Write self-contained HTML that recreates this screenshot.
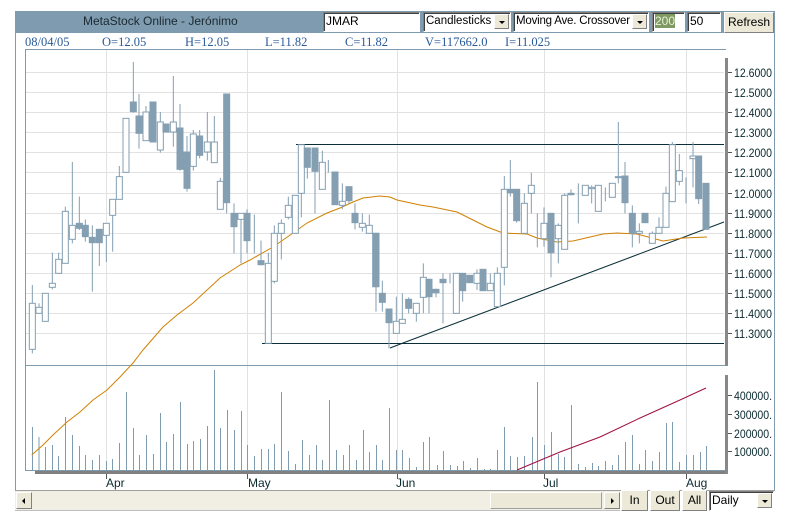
<!DOCTYPE html>
<html><head><meta charset="utf-8"><style>
body{margin:0;width:790px;height:522px;background:#fff;position:relative;overflow:hidden;font-family:"Liberation Sans",sans-serif}
.a{position:absolute}
.ser{font-family:"Liberation Serif",serif;font-size:12.5px;color:#2a5a98;top:35px}
.btn{position:absolute;background:#ece9d8;border:1px solid;border-color:#fff #808080 #808080 #fff;box-sizing:border-box;font-size:12px;text-align:center;line-height:19px;color:#000}
.inp{position:absolute;background:#fff;border:1px solid;border-color:#808080 #fff #fff #808080;box-shadow:inset 1px 1px 0 #404040;box-sizing:border-box;font-size:12px;line-height:17px;padding-left:2px;color:#000;white-space:nowrap;overflow:hidden}
.arr{position:absolute;right:1px;top:1px;width:15px;height:15px;background:#ece9d8;border:1px solid;border-color:#fff #808080 #808080 #fff;box-sizing:border-box}
.arr:after{content:"";position:absolute;left:4px;top:6px;border-left:3px solid transparent;border-right:3px solid transparent;border-top:3px solid #000}
</style></head><body>
<div class="a" style="left:15px;top:11px;width:760px;height:22px;background:#7f9bb0"></div>
<div class="a" style="left:83px;top:14px;font-size:12px;color:#1a2a30">MetaStock Online - Jerónimo</div>
<div class="inp" style="left:323px;top:12px;width:97px;height:20px">JMAR</div>
<div class="inp" style="left:423px;top:12px;width:88px;height:20px;font-size:11.5px">Candlesticks<div class="arr"></div></div>
<div class="inp" style="left:513px;top:12px;width:136px;height:20px;font-size:11.5px;letter-spacing:-0.2px">Moving Ave. Crossover<div class="arr"></div></div>
<div class="inp" style="left:652px;top:12px;width:33px;height:20px"><span style="background:#7f9a62;color:#e8f0d8">200</span></div>
<div class="inp" style="left:687px;top:12px;width:34px;height:20px">50</div>
<div class="btn" style="left:724px;top:12px;width:50px;height:21px;line-height:19px">Refresh</div>
<div class="a ser" style="left:25px">08/04/05</div>
<div class="a ser" style="left:102px">O=12.05</div>
<div class="a ser" style="left:185px">H=12.05</div>
<div class="a ser" style="left:265px">L=11.82</div>
<div class="a ser" style="left:345px">C=11.82</div>
<div class="a ser" style="left:425px">V=117662.0</div>
<div class="a ser" style="left:505px">I=11.025</div>

<svg class="a" style="left:0;top:0" width="790" height="522">
<g stroke="#7f9bb0" stroke-width="1" fill="none">
<path d="M15.5 33V490M774.5 33V490M25.5 49V471M25 49.5H726"/>
</g>
<g stroke="#e2e2e2" stroke-width="1">
<path d="M26 72.5H724M26 92.5H724M26 112.5H724M26 132.5H724M26 152.5H724M26 172.5H724M26 193.5H724M26 213.5H724M26 233.5H724M26 253.5H724M26 273.5H724M26 293.5H724M26 313.5H724M26 333.5H724"/>
<path d="M106.5 50V470M247.5 50V470M397.5 50V470M544.5 50V470M686.5 50V470"/>
</g>
<path d="M25 365.5H726M25 470.5H726" stroke="#7f9bb0"/>
<rect x="35" y="471" width="692" height="3" fill="#808080"/>
<rect x="725" y="58" width="3" height="308" fill="#888"/>
<rect x="725" y="375" width="3" height="99" fill="#888"/>
<path d="M728 72.5h4M728 92.5h4M728 112.5h4M728 132.5h4M728 152.5h4M728 172.5h4M728 193.5h4M728 213.5h4M728 233.5h4M728 253.5h4M728 273.5h4M728 293.5h4M728 313.5h4M728 333.5h4M728 395.5h4M728 414.5h4M728 433.5h4M728 451.5h4M106.5 474v5M247.5 474v5M397.5 474v5M544.5 474v5M686.5 474v5" stroke="#555"/>
<g font-size="12" fill="#0a2a30" font-family="Liberation Sans,sans-serif">
<g textLength="38" lengthAdjust="spacingAndGlyphs">
<text x="734" y="77" textLength="38" lengthAdjust="spacingAndGlyphs">12.6000</text><text x="734" y="97" textLength="38" lengthAdjust="spacingAndGlyphs">12.5000</text><text x="734" y="117" textLength="38" lengthAdjust="spacingAndGlyphs">12.4000</text><text x="734" y="137" textLength="38" lengthAdjust="spacingAndGlyphs">12.3000</text><text x="734" y="157" textLength="38" lengthAdjust="spacingAndGlyphs">12.2000</text><text x="734" y="177" textLength="38" lengthAdjust="spacingAndGlyphs">12.1000</text><text x="734" y="198" textLength="38" lengthAdjust="spacingAndGlyphs">12.0000</text><text x="734" y="218" textLength="38" lengthAdjust="spacingAndGlyphs">11.9000</text><text x="734" y="238" textLength="38" lengthAdjust="spacingAndGlyphs">11.8000</text><text x="734" y="258" textLength="38" lengthAdjust="spacingAndGlyphs">11.7000</text><text x="734" y="278" textLength="38" lengthAdjust="spacingAndGlyphs">11.6000</text><text x="734" y="298" textLength="38" lengthAdjust="spacingAndGlyphs">11.5000</text><text x="734" y="318" textLength="38" lengthAdjust="spacingAndGlyphs">11.4000</text><text x="734" y="338" textLength="38" lengthAdjust="spacingAndGlyphs">11.3000</text>
<text x="734" y="400" textLength="38" lengthAdjust="spacingAndGlyphs">400000.</text><text x="734" y="419" textLength="38" lengthAdjust="spacingAndGlyphs">300000.</text><text x="734" y="438" textLength="38" lengthAdjust="spacingAndGlyphs">200000.</text><text x="734" y="456" textLength="38" lengthAdjust="spacingAndGlyphs">100000.</text>
</g>
<text x="106" y="487">Apr</text><text x="248" y="487">May</text><text x="396" y="487">Jun</text><text x="543" y="487">Jul</text><text x="686" y="487">Aug</text>
</g>
<path stroke="#7f9bb0" stroke-width="1" d="M32.5 470V427M39 470V437M45.5 470V447M52.5 470V445M58.5 470V456M65.5 470V417M72.5 470V435M79.5 470V446M85.5 470V455M92.5 470V460M99.5 470V455M106.5 470V461M112.5 470V459M119.5 470V443M126.5 470V392M133.5 470V428M139.5 470V455M146.5 470V435M153.5 470V454M160.5 470V413M166.5 470V442M173.5 470V434M180.5 470V402M187.5 470V444M193.5 470V441M200.5 470V439M207.5 470V426M214.5 470V370M220.5 470V428M227.5 470V410M234.5 470V430M241.5 470V411M247.5 470V445M254.5 470V456M261.5 470V449M268.5 470V449M274.5 470V444M281.5 470V392M288.5 470V451M295.5 470V464M302.5 470V440M309.5 470V455M316.5 470V445M322.5 470V460M329.5 470V400M336.5 470V450M343.5 470V455M349.5 470V445M356.5 470V460M363.5 470V430M369.5 470V452M376.5 470V445M382.5 470V460M389.5 470V408M396.5 470V450M402.5 470V450M409.5 470V458M416.5 470V467M423.5 470V442M429.5 470V437M437.5 470V465M443.5 470V451M450.5 470V465M457.5 470V466M463.5 470V461M470.5 470V468M477.5 470V458M484.5 470V469M490.5 470V469M497.5 470V450M504.5 470V427M510.5 470V456M517.5 470V457M524.5 470V456M532.5 470V437M537.5 470V382M544.5 470V445M551.5 470V432M558.5 470V454M564.5 470V457M571.5 470V405M578.5 470V464M585.5 470V467M592.5 470V463M598.5 470V466M605.5 470V461M612.5 470V465M618.5 470V455M625.5 470V442M632.5 470V435M639.5 470V464M645.5 470V450M652.5 470V461M659.5 470V452M666.5 470V423M672.5 470V422M679.5 470V462M686.5 470V455M693.5 470V455M700.5 470V452M706.5 470V446"/>
<path d="M517 470L560 452L600 437L640 418L680 400L706 388" stroke="#a01040" fill="none"/>
<path d="M296 144.5H724M262 343.5H724M390 348L403 343L724 222" stroke="#0a2f38" fill="none"/>
<polyline fill="none" stroke="#d08000" stroke-width="1" points="31.7,455 43,445 53,435 67,422 80,412 93,400 107,390 120,377 133,363 143,350 163,327 177,315 193,303 220,278 240,265 250,260 273,247 293,233 307,223 327,213 340,208 353,202 363,198 380,196 390,197 397,200 420,205 433,207 457,212 467,217 487,227 503,233 527,234 537,238 557,242 573,241 603,234 617,233 637,234 663,241 683,238 707,237"/>
<g transform="translate(20,50) scale(0.33333)" stroke="#849fb2" stroke-width="3">
<path d="M37 705V910M57 760V790M97 608V718M116 608V670M136 470V640M157 336V580M178 440V540M196 508V575M217 526V725M238 538V648M259 520V636M278 448V605M298 348V448M340 36V188M357 132V296M378 168V272M421 186V308M460 78V290M480 162V362M501 258V425M520 240V362M539 240V325M562 186V332M583 198V338M601 384V478M620 132V490M642 460V610M663 490V640M681 478V610M703 494V610M723 572V646M745 608V880M763 526V700M784 508V628M805 440V508M844 284V502M862 294V386M885 294V490M907 302V418M925 330V368M967 400V478M987 410V460M1005 460V538M1027 490V545M1048 494V550M1068 550V785"/>
<g fill="#fff">
<rect x="28" y="760" width="18" height="138"/><rect x="48" y="772" width="18" height="18"/><rect x="67" y="730" width="18" height="84"/><rect x="88" y="700" width="18" height="12"/><rect x="107" y="628" width="18" height="42"/><rect x="127" y="484" width="18" height="156"/><rect x="148" y="526" width="18" height="42"/><rect x="250" y="520" width="18" height="36"/><rect x="269" y="448" width="18" height="48"/><rect x="289" y="380" width="18" height="68"/><rect x="309" y="205" width="18" height="162"/><rect x="369" y="186" width="18" height="86"/><rect x="412" y="216" width="18" height="84"/><rect x="451" y="216" width="18" height="30"/><rect x="511" y="252" width="18" height="97"/><rect x="553" y="276" width="18" height="30"/><rect x="574" y="276" width="18" height="62"/><rect x="592" y="394" width="18" height="84"/><rect x="654" y="490" width="18" height="18"/><rect x="736" y="640" width="18" height="240"/><rect x="754" y="550" width="18" height="144"/><rect x="775" y="520" width="18" height="30"/><rect x="796" y="466" width="18" height="36"/><rect x="817" y="436" width="18" height="114"/><rect x="835" y="284" width="18" height="146"/><rect x="898" y="337" width="18" height="81"/><rect x="958" y="454" width="18" height="12"/><rect x="1018" y="520" width="18" height="12"/><rect x="1039" y="526" width="18" height="24"/>
</g>
<g fill="#849fb2">
<rect x="331" y="156" width="18" height="29"/><rect x="348" y="198" width="18" height="52"/><rect x="390" y="156" width="18" height="120"/><rect x="429" y="222" width="18" height="24"/><rect x="471" y="234" width="18" height="124"/><rect x="492" y="306" width="18" height="109"/><rect x="530" y="258" width="18" height="58"/><rect x="611" y="132" width="18" height="326"/><rect x="633" y="490" width="18" height="40"/><rect x="672" y="490" width="18" height="82"/><rect x="714" y="632" width="18" height="12"/><rect x="853" y="294" width="18" height="58"/><rect x="876" y="294" width="18" height="70"/><rect x="936" y="366" width="18" height="98"/><rect x="978" y="410" width="18" height="42"/><rect x="996" y="490" width="18" height="28"/><rect x="1059" y="550" width="18" height="160"/><rect x="208" y="562" width="18" height="16"/><rect x="229" y="538" width="18" height="40"/><rect x="169" y="520" width="18" height="15"/><rect x="187" y="526" width="18" height="34"/>
</g>
</g>
<g transform="translate(370,50) scale(0.33333)" stroke="#849fb2" stroke-width="3">
<path d="M37 692V785M57 777V895M79 740V850M97 730V820M116 742V790M139 760V815M160 640V790M177 686V790M198 716V742M219 670V820M240 670V700M278 670V755M321 658V720M361 670V722M382 652V770M403 378V706M421 330V440M440 418V518M463 430V550M484 368V490M502 490V592M522 472V590M543 490V682M565 520V640M584 430V598M603 418V436M625 400V520M665 406V460M706 412V454M745 216V400M765 336V490M787 466V592M808 520V580M847 544V580M867 502V550M888 410V532M907 276V455M928 312V406M948 382V460M969 276V412M986 318V462M1008 400V538"/>
<g fill="#fff">
<rect x="70" y="814" width="18" height="36"/><rect x="88" y="808" width="18" height="12"/><rect x="130" y="760" width="18" height="30"/><rect x="151" y="682" width="18" height="60"/><rect x="250" y="670" width="18" height="120"/><rect x="312" y="670" width="18" height="30"/><rect x="352" y="700" width="18" height="22"/><rect x="373" y="670" width="18" height="100"/><rect x="394" y="418" width="18" height="234"/><rect x="454" y="460" width="18" height="90"/><rect x="475" y="406" width="18" height="24"/><rect x="513" y="520" width="18" height="46"/><rect x="556" y="526" width="18" height="40"/><rect x="575" y="436" width="18" height="162"/><rect x="637" y="406" width="18" height="30"/><rect x="656" y="412" width="18" height="4"/><rect x="676" y="406" width="18" height="78"/><rect x="718" y="400" width="18" height="42"/><rect x="799" y="544" width="18" height="6"/><rect x="838" y="550" width="18" height="30"/><rect x="858" y="532" width="18" height="18"/><rect x="879" y="430" width="18" height="102"/><rect x="898" y="284" width="18" height="171"/><rect x="919" y="362" width="18" height="32"/><rect x="960" y="318" width="18" height="8"/>
</g>
<g fill="#849fb2">
<rect x="8" y="550" width="18" height="160"/><rect x="28" y="730" width="18" height="27"/><rect x="48" y="777" width="18" height="41"/><rect x="107" y="748" width="18" height="27"/><rect x="168" y="688" width="18" height="52"/><rect x="189" y="718" width="18" height="10"/><rect x="210" y="688" width="18" height="10"/><rect x="269" y="670" width="18" height="52"/><rect x="290" y="676" width="18" height="22"/><rect x="330" y="658" width="18" height="64"/><rect x="412" y="418" width="18" height="10"/><rect x="431" y="418" width="18" height="94"/><rect x="534" y="490" width="18" height="118"/><rect x="594" y="430" width="18" height="4"/><rect x="736" y="380" width="18" height="3"/><rect x="756" y="378" width="18" height="80"/><rect x="778" y="490" width="18" height="60"/><rect x="816" y="490" width="18" height="28"/><rect x="977" y="318" width="18" height="128"/><rect x="999" y="400" width="18" height="138"/>
</g>
</g>
</svg>

<div class="a" style="left:15px;top:490px;width:760px;height:1px;background:#a0a0a0"></div>
<div class="a" style="left:15px;top:491px;width:605px;height:19px;background:#f1efe3;border-bottom:1px solid #c0c0c0"></div>
<div class="btn" style="left:16px;top:492px;width:16px;height:17px"><span style="position:absolute;left:5px;top:5px;border-top:3px solid transparent;border-bottom:3px solid transparent;border-right:3px solid #000"></span></div>
<div class="a" style="left:490px;top:492px;width:112px;height:17px;background:#ece9d8;border:1px solid;border-color:#fff #a0a0a0 #a0a0a0 #fff;box-sizing:border-box"></div>
<div class="btn" style="left:604px;top:492px;width:16px;height:17px"><span style="position:absolute;left:6px;top:5px;border-top:3px solid transparent;border-bottom:3px solid transparent;border-left:3px solid #000"></span></div>
<div class="btn" style="left:621px;top:490px;width:27px;height:21px">In</div>
<div class="btn" style="left:650px;top:490px;width:30px;height:21px">Out</div>
<div class="btn" style="left:682px;top:490px;width:25px;height:21px">All</div>
<div class="inp" style="left:709px;top:491px;width:65px;height:20px">Daily<div class="arr"></div></div>
</body></html>
